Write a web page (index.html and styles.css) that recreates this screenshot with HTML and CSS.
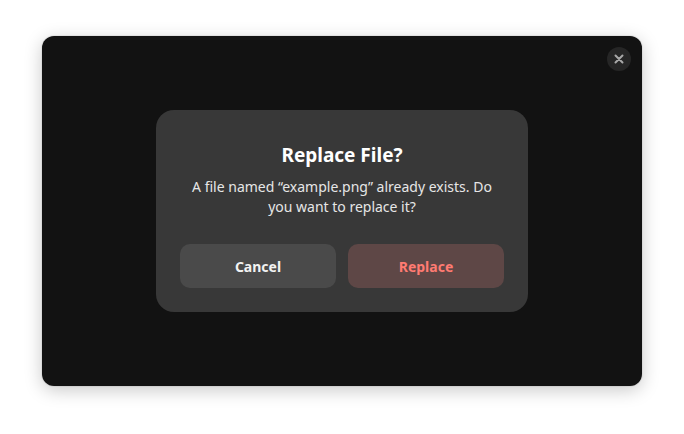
FILE: index.html
```html
<!DOCTYPE html>
<html>
<head>
<meta charset="utf-8">
<link rel="stylesheet" href="styles.css">
</head>
<body>
<div class="window">
  <button class="close" aria-label="Close">
    <svg width="10" height="10" viewBox="0 0 10 10"><path d="M1.5 1.5 L8.5 8.5 M8.5 1.5 L1.5 8.5" stroke="#a8a8a8" stroke-width="2" stroke-linecap="round"/></svg>
  </button>
  <div class="dialog">
    <h1 class="title">Replace File?</h1>
    <p class="body">A file named “example.png” already exists. Do you want to replace it?</p>
    <div class="buttons">
      <button class="btn cancel">Cancel</button>
      <button class="btn replace">Replace</button>
    </div>
  </div>
</div>
</body>
</html>
```

FILE: styles.css
```css
html, body {
  margin: 0;
  padding: 0;
  background: #ffffff;
  width: 684px;
  height: 434px;
  overflow: hidden;
}
body {
  padding: 36px 42px;
  box-sizing: border-box;
  font-family: "Noto Sans", "Open Sans", sans-serif;
}
.window {
  position: relative;
  width: 600px;
  height: 350px;
  background: #121212;
  border-radius: 12px;
  box-shadow: 0 4px 18px rgba(0,0,0,0.22), 0 0 0 1px rgba(0,0,0,0.05);
  display: flex;
  align-items: center;
  justify-content: center;
}
.close {
  position: absolute;
  top: 11px;
  right: 11px;
  width: 24px;
  height: 24px;
  border-radius: 50%;
  border: none;
  padding: 0;
  background: #262626;
  display: flex;
  align-items: center;
  justify-content: center;
}
.dialog {
  width: 372px;
  height: 202px;
  box-sizing: border-box;
  background: #383838;
  border-radius: 18px;
  padding: 33px 24px 24px;
  display: flex;
  flex-direction: column;
  align-items: center;
}
.title {
  margin: 0;
  font-size: 19px;
  line-height: 24px;
  font-weight: 700;
  color: #ffffff;
}
.body {
  margin: 10px 0 0;
  width: 310px;
  text-align: center;
  font-size: 14px;
  line-height: 20px;
  color: #e6e6e6;
}
.buttons {
  margin-top: auto;
  display: flex;
  gap: 12px;
  width: 100%;
}
.btn {
  flex: 1;
  height: 44px;
  border: none;
  border-radius: 10px;
  font-family: inherit;
  font-size: 14px;
  font-weight: 700;
}
.cancel {
  background: #4a4a4a;
  color: #f2f2f2;
}
.replace {
  background: #5e4746;
  color: #ff7b72;
}
```
